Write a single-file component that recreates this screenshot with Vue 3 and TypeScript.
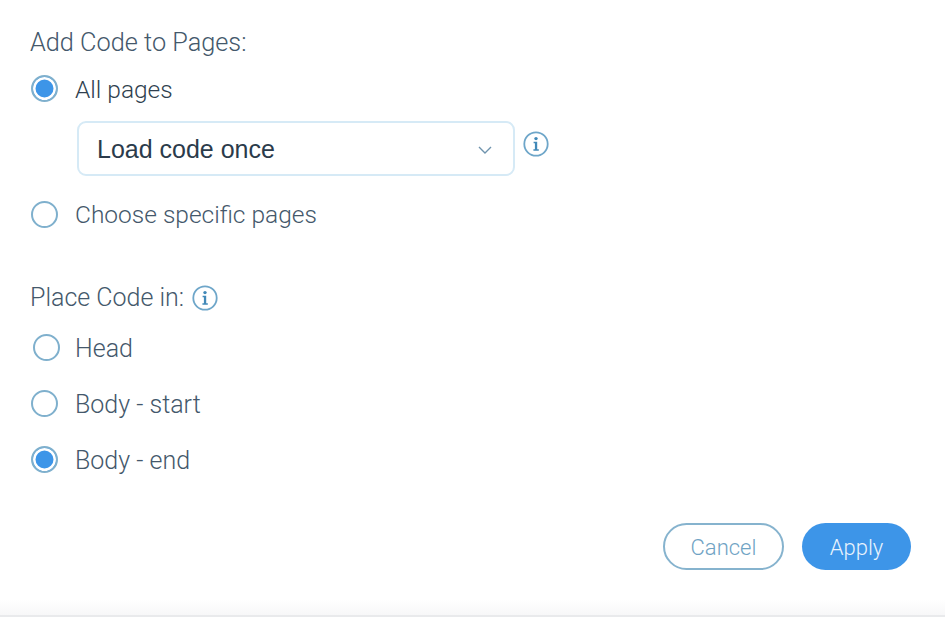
<script setup lang="ts">
const placeOptions = [
  { label: 'Head', checked: false, shifted: true },
  { label: 'Body - start', checked: false, shifted: false },
  { label: 'Body - end', checked: true, shifted: false },
]
</script>

<template>
  <div class="panel">
    <h2 class="heading first">Add Code to Pages:</h2>
    <div class="option all">
      <span class="radio on"></span>
      <span class="label dark">All pages</span>
    </div>
    <div class="select-row">
      <div class="select">
        <span class="select-text">Load code once</span>
        <svg class="chev" width="16" height="10" viewBox="0 0 16 10"><path d="M2 2l6 6 6-6" fill="none" stroke="#6f93ad" stroke-width="1.4" /></svg>
      </div>
      <svg class="info side" width="26" height="26" viewBox="0 0 26 26">
        <circle cx="13" cy="13" r="11.7" fill="none" stroke="#6ea6c9" stroke-width="1.8" />
        <circle cx="13" cy="7.6" r="1.7" fill="#4189b8" />
        <path d="M10.6 10.8h3.6v7.4h1.6v1.5h-5.4v-1.5h1.5v-5.9h-1.3z" fill="#4189b8" />
      </svg>
    </div>
    <div class="option choose">
      <span class="radio"></span>
      <span class="label">Choose specific pages</span>
    </div>

    <h2 class="heading second">
      Place Code in:
      <svg class="info" width="26" height="26" viewBox="0 0 26 26">
        <circle cx="13" cy="13" r="11.7" fill="none" stroke="#6ea6c9" stroke-width="1.8" />
        <circle cx="13" cy="7.6" r="1.7" fill="#4189b8" />
        <path d="M10.6 10.8h3.6v7.4h1.6v1.5h-5.4v-1.5h1.5v-5.9h-1.3z" fill="#4189b8" />
      </svg>
    </h2>
    <div class="place-list">
      <div v-for="o in placeOptions" :key="o.label" class="option">
        <span class="radio" :class="{ on: o.checked, shifted: o.shifted }"></span>
        <span class="label">{{ o.label }}</span>
      </div>
    </div>

    <div class="actions">
      <button class="btn cancel">Cancel</button>
      <button class="btn apply">Apply</button>
    </div>
  </div>
  <div class="footer"></div>
</template>

<style>
html, body { background: #fff; }
</style>

<style scoped>
.panel {
  height: 600px;
  box-sizing: border-box;
  padding: 28px 34px 0 30px;
  font-family: Roboto, "Liberation Sans", sans-serif;
  font-weight: 300;
  font-size: 25px;
  color: #44586b;
  display: flex;
  flex-direction: column;
}
.heading {
  margin: 0;
  font: inherit;
  line-height: 30px;
  display: flex;
  align-items: center;
  gap: 8px;
}
.first { font-size: 25.3px; }
.second { margin-top: 55px; }
.option {
  display: flex;
  align-items: center;
  gap: 17px;
  height: 28px;
  line-height: 28px;
}
.label { padding-top: 4px; }
.dark { color: #2f3f4f; }
.all { margin-top: 16px; font-size: 24.5px; }
.choose { margin-top: 24px; font-size: 24.5px; }
.choose .label { padding-top: 2px; }
.radio {
  width: 27px;
  height: 27px;
  margin-left: 1px;
  box-sizing: border-box;
  border: 2px solid #7fb0cd;
  border-radius: 50%;
  background: #fff;
  flex: none;
}
.radio.on {
  background: #3d95e8;
  box-shadow: inset 0 0 0 2.5px #fff;
}
.radio.shifted { transform: translateX(2px); }
.select-row {
  margin: 19px 0 0 47px;
  display: flex;
  align-items: flex-start;
  gap: 8px;
}
.select {
  width: 438px;
  height: 55px;
  box-sizing: border-box;
  border: 2px solid #d6eaf6;
  border-radius: 9px;
  padding: 0 20px 0 18px;
  display: flex;
  align-items: center;
  justify-content: space-between;
  font-family: "Liberation Sans", Arial, sans-serif;
  font-weight: 400;
  color: #2b3b4b;
}
.select-text { padding-top: 2px; }
.chev { margin-top: 2px; }
.side { margin-top: 10px; }
.place-list {
  display: flex;
  flex-direction: column;
  gap: 28px;
  margin-top: 20px;
}
.actions {
  margin-top: auto;
  margin-bottom: 30px;
  display: flex;
  justify-content: flex-end;
  gap: 18px;
}
.btn {
  height: 47px;
  border-radius: 24px;
  font: inherit;
  font-size: 22px;
  padding: 2px 0 0;
}
.cancel {
  width: 121px;
  background: #fff;
  border: 2px solid #86b3ce;
  color: #6fa3c4;
}
.apply {
  width: 109px;
  background: #3d95e8;
  border: none;
  color: #e8f3fd;
}
.footer {
  height: 17px;
  box-sizing: border-box;
  background: linear-gradient(#fff, #f7f7f8);
  border-bottom: 2px solid #e9eaec;
}
</style>
